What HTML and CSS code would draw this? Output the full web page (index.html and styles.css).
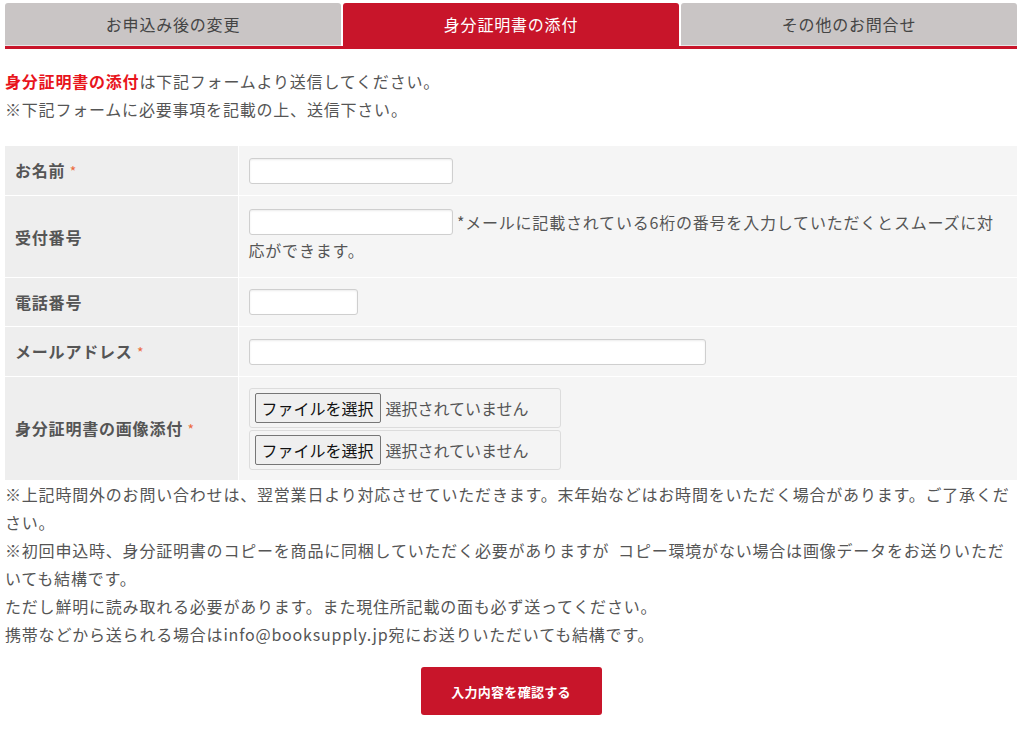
FILE: index.html
```html
<!DOCTYPE html>
<html lang="ja">
<head>
<meta charset="utf-8">
<title>身分証明書の添付</title>
<link rel="stylesheet" href="styles.css">
</head>
<body>
<div class="wrap">
  <nav class="tabs">
    <a class="tab">お申込み後の変更</a>
    <a class="tab active">身分証明書の添付</a>
    <a class="tab">その他のお問合せ</a>
  </nav>

  <p class="intro"><strong class="hl">身分証明書の添付</strong>は下記フォームより送信してください。<br>※下記フォームに必要事項を記載の上、送信下さい。</p>

  <table class="form">
    <tr class="r1">
      <th>お名前 <span class="req">*</span></th>
      <td><span class="input w-name"></span></td>
    </tr>
    <tr class="r2">
      <th>受付番号</th>
      <td><span class="input w-name"></span> *メールに記載されている6桁の番号を入力していただくとスムーズに対応ができます。</td>
    </tr>
    <tr class="r1">
      <th>電話番号</th>
      <td><span class="input w-tel"></span></td>
    </tr>
    <tr class="r1">
      <th>メールアドレス <span class="req">*</span></th>
      <td><span class="input w-mail"></span></td>
    </tr>
    <tr class="r5">
      <th>身分証明書の画像添付 <span class="req">*</span></th>
      <td>
        <div class="files">
          <div class="filebox"><span class="filebtn">ファイルを選択</span><span class="filetxt">選択されていません</span></div>
          <div class="filebox"><span class="filebtn">ファイルを選択</span><span class="filetxt">選択されていません</span></div>
        </div>
      </td>
    </tr>
  </table>

  <div class="notes">
    <p>※上記時間外のお問い合わせは、翌営業日より対応させていただきます。末年始などはお時間をいただく場合があります。ご了承ください。</p>
    <p>※初回申込時、身分証明書のコピーを商品に同梱していただく必要がありますが&ensp;コピー環境がない場合は画像データをお送りいただいても結構です。</p>
    <p>ただし鮮明に読み取れる必要があります。また現住所記載の面も必ず送ってください。</p>
    <p>携帯などから送られる場合はinfo@booksupply.jp宛にお送りいただいても結構です。</p>
  </div>

  <div class="actions">
    <button class="submit" type="button">入力内容を確認する</button>
  </div>
</div>
</body>
</html>
```
FILE: styles.css
```css
* { box-sizing: border-box; }
html, body { margin: 0; padding: 0; background: #fff; }
body {
  font-family: "Noto Sans CJK JP", "Noto Sans", sans-serif;
  font-size: 16px;
  letter-spacing: 0.05em;
  color: #555;
  line-height: 28px;
}
.wrap {
  width: 1012px;
  margin: 0 0 0 5px;
  padding-top: 3px;
}
.tabs {
  display: flex;
  gap: 2px;
  border-bottom: 3px solid #c8152a;
}
.tab {
  flex: 1;
  height: 43px;
  display: flex;
  align-items: center;
  justify-content: center;
  background: #c9c5c5;
  color: #444;
  border-radius: 3px 3px 0 0;
  border-bottom: 1px solid #e9e6e6;
}
.tab.active {
  background: #c8152a;
  color: #fff;
  border-bottom-color: #c8152a;
}
.intro {
  margin: 18px 0 23px;
}
.hl { color: #e8141c; font-weight: 700; }

.form {
  width: 100%;
  border-collapse: collapse;
}
.form th, .form td {
  border-top: 1px solid #fff;
  vertical-align: middle;
  padding: 10px;
}
.form tr:first-child th, .form tr:first-child td { border-top: 0; }
.form th {
  width: 233px;
  background: #eeeeee;
  text-align: left;
  font-weight: 700;
  border-right: 1px solid #fff;
  color: #555;
}
.form td {
  background: #f5f5f5;
}
.form .r2 td { padding-top: 12px; padding-bottom: 13px; }
.form .r5 td { padding-top: 11px; padding-bottom: 10px; }
.req { color: #ec6a3c; font-weight: 400; font-size: 14px; }

.input {
  display: inline-block;
  height: 26px;
  margin: 1px 0;
  vertical-align: top;
  background: #fff;
  border: 1px solid #cfcfcf;
  border-radius: 3px;
  box-shadow: inset 0 1px 2px rgba(0,0,0,0.08);
}
.w-name { width: 204px; }
.w-tel { width: 109px; }
.w-mail { width: 457px; }

.files {
  display: flex;
  flex-direction: column;
  gap: 2px;
}
.filebox {
  width: 312px;
  height: 40px;
  border: 1px solid #dcdcdc;
  border-radius: 3px;
  background: #f4f4f4;
  display: flex;
  align-items: center;
  padding: 0 5px;
  letter-spacing: 0;
}
.filebtn {
  height: 30px;
  width: 126px;
  display: flex;
  align-items: center;
  justify-content: center;
  border: 1px solid #767676;
  border-radius: 2px;
  background: #efefef;
  color: #111;
  font-size: 16px;
}
.filetxt {
  margin-left: 5px;
  color: #555;
}

.notes p { margin: 0; }
.actions {
  display: flex;
  justify-content: center;
  margin-top: 19px;
}
.submit {
  width: 181px;
  height: 48px;
  border: 0;
  border-radius: 3px;
  background: #c8152a;
  color: #fff;
  font-family: inherit;
  font-size: 13px;
  font-weight: 700;
  letter-spacing: 0.02em;
}
```
